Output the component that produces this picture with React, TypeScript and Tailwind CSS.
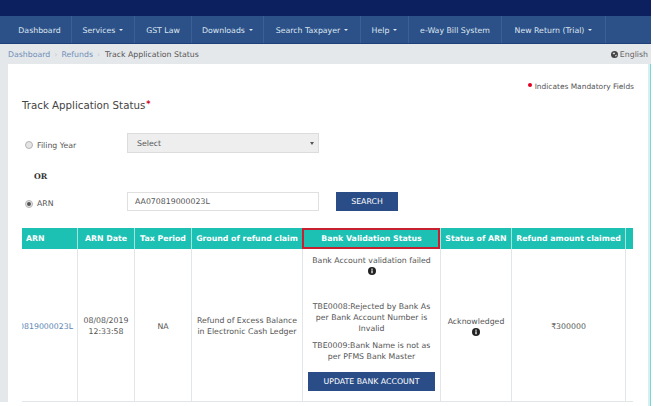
import React from "react";

const navItems = [
  { label: "Dashboard", w: "w-[72px] pl-[8px]" },
  { label: "Services", caret: true, w: "w-[63px]" },
  { label: "GST Law", w: "w-[57px]" },
  { label: "Downloads", caret: true, w: "w-[72px]" },
  { label: "Search Taxpayer", caret: true, w: "w-[97px]" },
  { label: "Help", caret: true, w: "w-[48px]" },
  { label: "e-Way Bill System", w: "w-[93px]" },
  { label: "New Return (Trial)", caret: true, w: "w-[104px]" },
];

function InfoIcon() {
  return (
    <svg viewBox="0 0 10 10" className="mx-auto h-[8px] w-[8px]">
      <circle cx="5" cy="5" r="5" fill="#222" />
      <rect x="4.2" y="4.2" width="1.6" height="3.6" fill="#fff" />
      <rect x="4.2" y="2" width="1.6" height="1.5" fill="#fff" />
    </svg>
  );
}

function Radio({ checked }: { checked?: boolean }) {
  return (
    <span className="flex h-[8px] w-[8px] items-center justify-center rounded-full border border-[#b5b5b5] bg-[#e4e4e4]">
      {checked && <span className="h-[4px] w-[4px] rounded-full bg-[#555]" />}
    </span>
  );
}

function Th({ w, children }: { w: string; children: React.ReactNode }) {
  return (
    <div className={`${w} flex shrink-0 items-center justify-center overflow-hidden whitespace-nowrap border-r border-[#a5e3dd]`}>
      {children}
    </div>
  );
}

function Td({ w, children, className = "" }: { w: string; children?: React.ReactNode; className?: string }) {
  return (
    <div className={`${w} flex shrink-0 flex-col justify-center overflow-hidden border-r border-[#e3e6e8] pt-[2px] text-center ${className}`}>
      {children}
    </div>
  );
}

export default function App() {
  return (
    <div className="h-[406px] w-[653px] overflow-hidden bg-white font-['DejaVu_Sans',sans-serif] text-[7.8px] leading-[11px] text-[#555]">
      <div className="w-[651px]">
        <div className="h-[16px] bg-[#0c1f5e]" />
        <nav className="flex h-[28px] items-center border-b border-[#1f3f78] bg-[#2b5188] text-[#dfe6f0]">
          {navItems.map((item) => (
            <div key={item.label} className={`${item.w} flex h-full items-center justify-center gap-[4px] whitespace-nowrap border-r border-[#3a6098] pt-[1px]`}>
              {item.label}
              {item.caret && <span className="h-0 w-0 border-x-[2px] border-t-[2px] border-x-transparent border-t-[#dfe6f0]" />}
            </div>
          ))}
        </nav>
        <div className="flex h-[20px] items-center justify-between bg-[#e5e8eb] pl-[8px] pr-[3px]">
          <div className="flex items-center gap-[4px]">
            <span className="text-[#6f8fb8]">Dashboard</span>
            <span className="text-[#c9ced3]">›</span>
            <span className="text-[#6f8fb8]">Refunds</span>
            <span className="text-[#c9ced3]">›</span>
            <span className="ml-[1px] text-[#555]">Track Application Status</span>
          </div>
          <div className="flex items-center gap-[2px] text-[#666]">
            <svg viewBox="0 0 10 10" className="h-[7px] w-[7px]">
              <circle cx="5" cy="5" r="5" fill="#444" />
              <path d="M2 3l3-1 1 2-2 1zM6 6l2-1 0 2-2 1z" fill="#ddd" />
            </svg>
            English
          </div>
        </div>
        <div className="flex h-[342px]">
          <div className="h-[338px] w-[8px] bg-[#e5e8eb]" />
          <main className="w-[640px] shrink-0 overflow-hidden bg-white pl-[14px]">
            <div className="flex h-[28px] items-end justify-end pr-[14px] text-[7.45px]">
              <span className="mr-[3px] h-[4px] w-[4px] -translate-y-[5px] rounded-full bg-[#e00020]" />
              Indicates Mandatory Fields
            </div>
            <div className="mt-[6px] h-[14px] text-[10.25px] leading-[14px] text-[#444]">
              Track Application Status<span className="relative -top-[2px] ml-[1px] text-[8px] font-bold leading-none text-[#d00020]">*</span>
            </div>
            <div className="mt-[21px] flex h-[20px] items-center">
              <div className="flex w-[105px] translate-y-[2px] items-center gap-[4px] pl-[3px]">
                <Radio />
                Filing Year
              </div>
              <div className="flex h-[20px] w-[192px] items-center justify-between border border-[#dcdcdc] bg-[#eeeeee] pl-[9px] pr-[4px]">
                Select
                <span className="h-0 w-0 border-x-[2px] border-t-[3px] border-x-transparent border-t-[#555]" />
              </div>
            </div>
            <div className="ml-[12px] mt-[18px] font-['DejaVu_Serif',serif] font-bold text-[#333]">OR</div>
            <div className="mt-[10px] flex h-[19px] items-center">
              <div className="flex w-[105px] translate-y-[2px] items-center gap-[4px] pl-[3px]">
                <Radio checked />
                ARN
              </div>
              <div className="flex h-[19px] w-[192px] items-center border border-[#e0e0e0] bg-white pl-[7px]">AA070819000023L</div>
              <button className="ml-[17px] h-[19px] w-[62px] bg-[#2a4d87] text-white">SEARCH</button>
            </div>
            <div className="mt-[17px] w-[611px] overflow-hidden">
              <div className="flex h-[21px] bg-[#1cc1b4] font-bold text-white">
                <Th w="w-[56px]"><span className="w-full pl-[4px]">ARN</span></Th>
                <Th w="w-[57px]">ARN Date</Th>
                <Th w="w-[57px]">Tax Period</Th>
                <Th w="w-[111px]">Ground of refund claim</Th>
                <div className="relative flex w-[138px] shrink-0 items-center justify-center border-r border-[#a5e3dd]">
                  Bank Validation Status
                  <span className="absolute inset-y-0 -left-[1px] right-0 border-2 border-[#c8202f]" />
                </div>
                <Th w="w-[71px]">Status of ARN</Th>
                <Th w="w-[114px]">Refund amount claimed</Th>
                <div className="w-[7px]" />
              </div>
              <div className="flex h-[153px] border-b border-[#e3e6e8]">
                <Td w="w-[56px]">
                  <div className="flex justify-end pr-[4px] text-[#5b86b5]">
                    <span className="whitespace-nowrap">AA070819000023L</span>
                  </div>
                </Td>
                <Td w="w-[57px]">
                  <div>08/08/2019</div>
                  <div>12:33:58</div>
                </Td>
                <Td w="w-[57px]">NA</Td>
                <Td w="w-[111px]">
                  <div>Refund of Excess Balance</div>
                  <div>in Electronic Cash Ledger</div>
                </Td>
                <Td w="w-[138px]" className="!justify-start px-[5px] !pt-[6px]">
                  <div>Bank Account validation failed</div>
                  <div className="mt-[1px] h-[11px]"><InfoIcon /></div>
                  <div className="mt-[23px]">TBE0008:Rejected by Bank As per Bank Account Number is Invalid</div>
                  <div className="mt-[6px]">TBE0009:Bank Name is not as per PFMS Bank Master</div>
                  <button className="mt-[10px] h-[19px] w-[127px] shrink-0 bg-[#2a4d87] text-white">UPDATE BANK ACCOUNT</button>
                </Td>
                <Td w="w-[71px]">
                  <div>Acknowledged</div>
                  <div className="mt-[1px]"><InfoIcon /></div>
                </Td>
                <Td w="w-[114px]">₹300000</Td>
              </div>
            </div>
          </main>
          <div className="w-[3px] border-r border-[#7fd6cf] bg-[#d5f0f0]" />
        </div>
      </div>
    </div>
  );
}
